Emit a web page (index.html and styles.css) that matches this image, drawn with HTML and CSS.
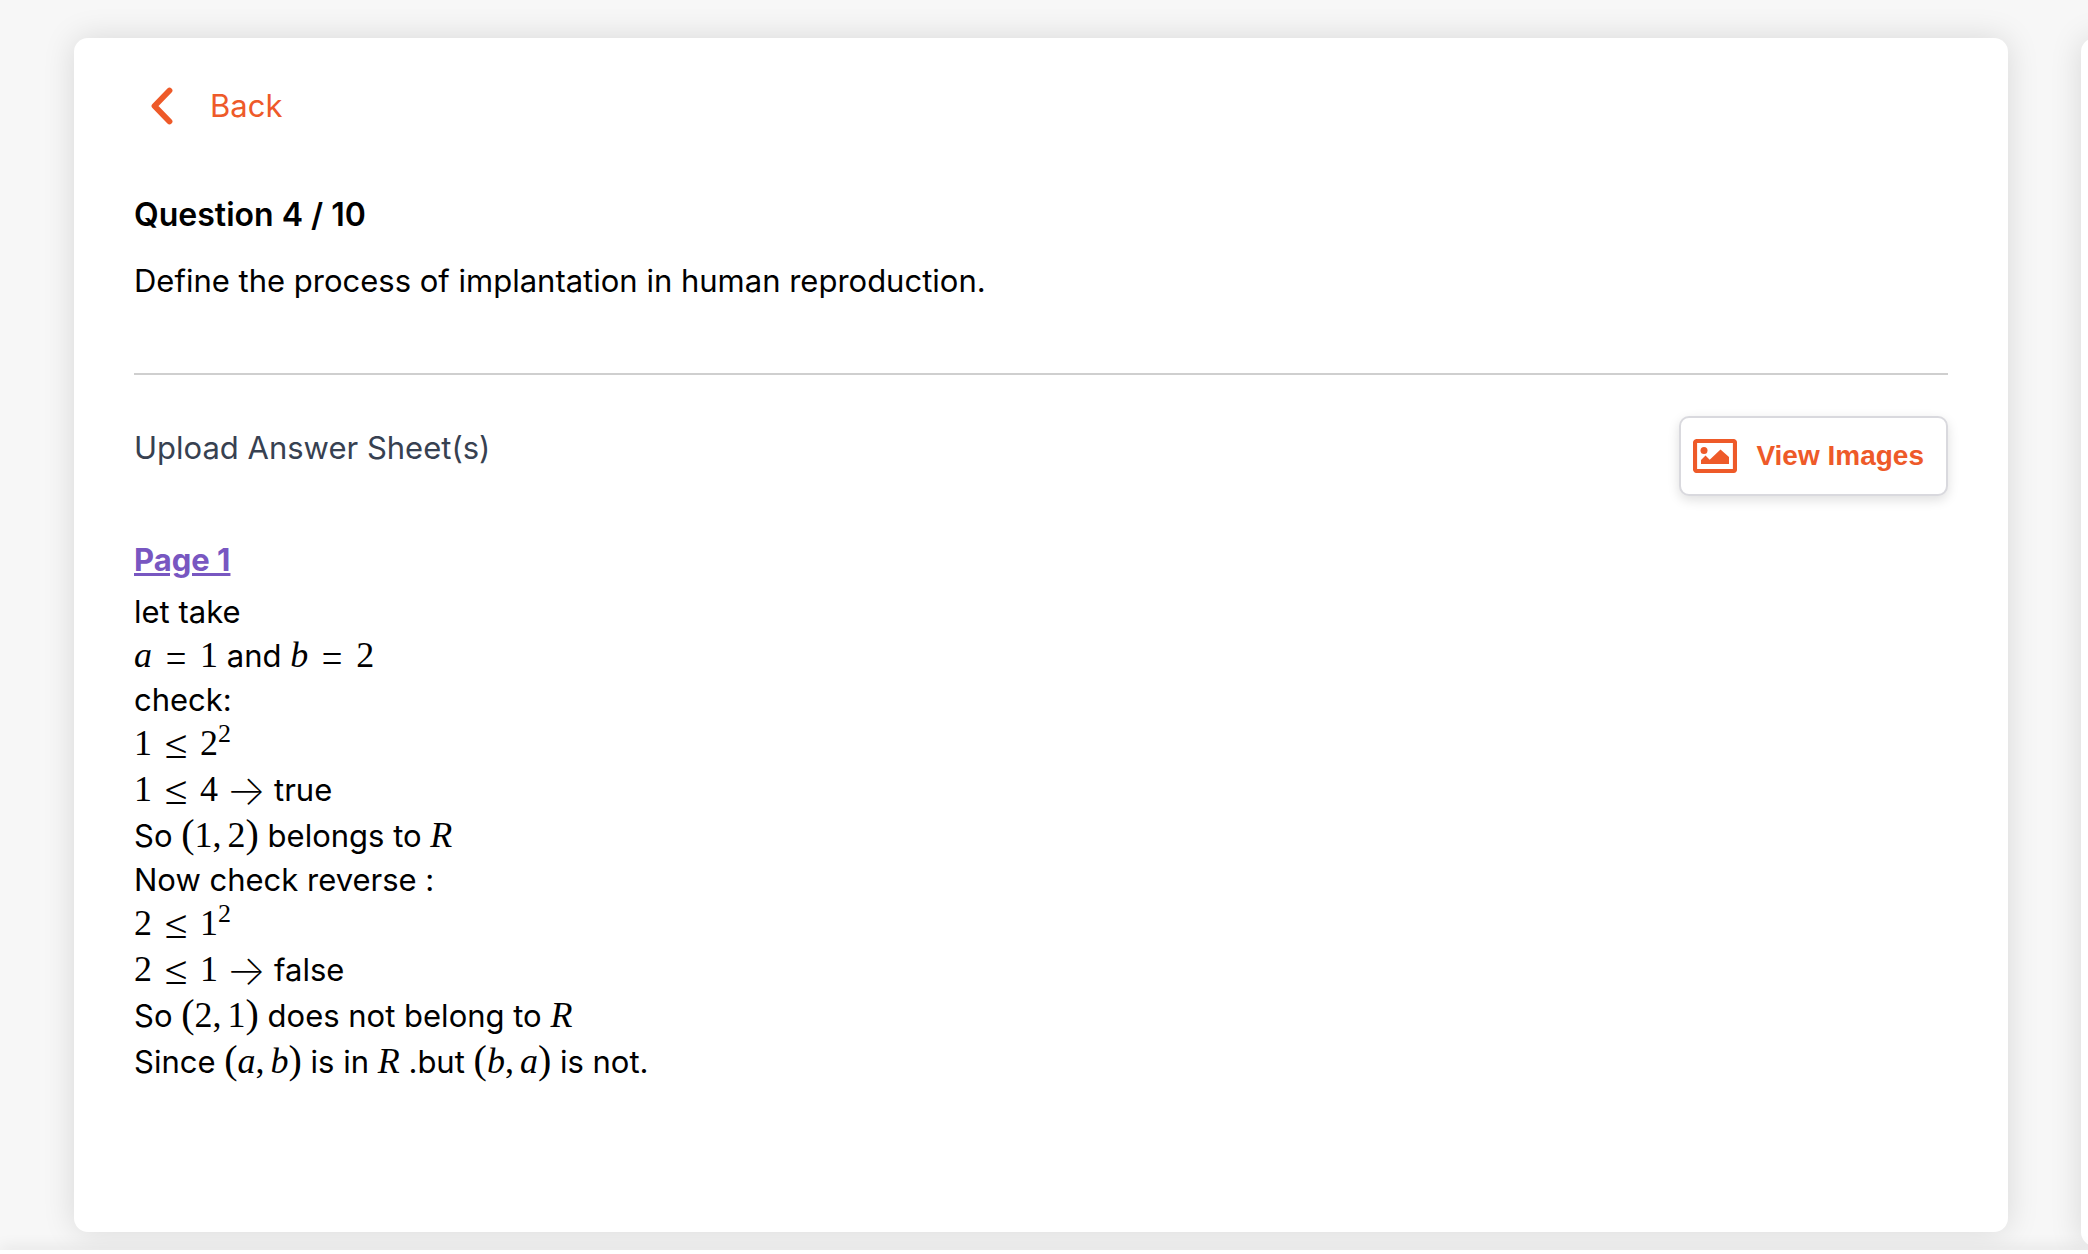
FILE: index.html
```html
<!DOCTYPE html>
<html lang="en">
<head>
<meta charset="utf-8">
<title>Question 4 / 10</title>
<link rel="stylesheet" href="styles.css">
</head>
<body>
<div class="page">
  <main class="card question">
    <a class="back" href="#">
      <svg class="back-icon" viewBox="0 0 24 38" aria-hidden="true"><path d="M19.500 3.500 4.500 19l15 15.500" fill="none" stroke="currentColor" stroke-width="5.800" stroke-linecap="round" stroke-linejoin="round"/></svg>
      <span>Back</span>
    </a>
    <h1 class="title">Question 4 / 10</h1>
    <p class="prompt">Define the process of implantation in human reproduction.</p>
    <section class="answer">
      <div class="toolbar">
        <h2 class="subtitle">Upload Answer Sheet(s)</h2>
        <button class="view" type="button">
          <svg class="view-icon" viewBox="0 0 44 34" aria-hidden="true"><rect x="2" y="2" width="40" height="30" rx="2" fill="none" stroke="currentColor" stroke-width="4.200"/><circle cx="11" cy="11.500" r="3.500" fill="currentColor"/><path d="M8 25v-4l4.500-4.500 4.200 4.200L27.500 10.500 36 18v7z" fill="currentColor"/></svg>
          <span>View Images</span>
        </button>
      </div>
      <a class="page-link" href="#">Page 1</a>
      <div class="sheet">
        <p>let take</p>
        <p><span class="math"><i>a</i><span class="rel">=</span>1</span> and <span class="math"><i>b</i><span class="rel">=</span>2</span></p>
        <p>check:</p>
        <p><span class="math">1<span class="rel">≤</span>2<sup>2</sup></span></p>
        <p class="tall"><span class="math">1<span class="rel">≤</span>4<span class="arrow">→</span></span>true</p>
        <p class="tall">So <span class="math"><span class="paren">(</span>1<span class="comma">,</span>2<span class="paren">)</span></span> belongs to <span class="math"><i>R</i></span></p>
        <p>Now check reverse :</p>
        <p><span class="math">2<span class="rel">≤</span>1<sup>2</sup></span></p>
        <p class="tall"><span class="math">2<span class="rel">≤</span>1<span class="arrow">→</span></span>false</p>
        <p class="tall">So <span class="math"><span class="paren">(</span>2<span class="comma">,</span>1<span class="paren">)</span></span> does not belong to <span class="math"><i>R</i></span></p>
        <p class="tall">Since <span class="math"><span class="paren">(</span><i>a</i><span class="comma">,</span><i>b</i><span class="paren">)</span></span> is in <span class="math"><i>R</i></span> .but <span class="math"><span class="paren">(</span><i>b</i><span class="comma">,</span><i>a</i><span class="paren">)</span></span> is not.</p>
      </div>
    </section>
  </main>
  <aside class="card next"></aside>
</div>
<footer class="bar"></footer>
</body>
</html>
```
FILE: styles.css
```css
* {
  box-sizing: border-box;
}

body {
  margin: 0;
  min-height: 100vh;
  display: flex;
  flex-direction: column;
  overflow: hidden;
  background: #f7f7f7;
  color: #000;
  font: 400 31px/44px Inter, "Liberation Sans", sans-serif;
}

h1, h2, p {
  margin: 0;
  font-size: inherit;
}

.page {
  flex: 1;
  display: flex;
  gap: 73px;
  padding: 38px 0 4px 74px;
}

.card {
  background: #fff;
  border-radius: 14px;
  box-shadow: 0 0 32px rgba(0, 0, 0, 0.13);
}

.question {
  flex: 1;
  margin-bottom: 14px;
  padding: 46px 60px;
}

.next {
  flex: 0 0 40px;
  margin-right: -33px;
}

.bar {
  height: 4px;
  background: #fff;
  box-shadow: 0 0 16px rgba(0, 0, 0, 0.2);
}

.back {
  display: inline-flex;
  align-items: center;
  gap: 36px;
  margin-left: 16px;
  color: #ee5a29;
  text-decoration: none;
}

.back-icon {
  width: 24px;
  height: 38px;
}

.title {
  margin-top: 57px;
  font-size: 32px;
  font-weight: 600;
}

.prompt {
  margin-top: 22px;
}

.answer {
  margin-top: 70px;
  padding-top: 41px;
  border-top: 2px solid #cfcfcf;
}

.toolbar {
  display: flex;
  justify-content: space-between;
  align-items: flex-start;
}

.subtitle {
  margin-top: 10px;
  color: #374151;
  font-weight: 400;
}

.view {
  display: flex;
  align-items: center;
  gap: 19px;
  height: 80px;
  padding: 0 22px 0 12px;
  border: 2px solid #d9d9de;
  border-radius: 10px;
  background: #fff;
  box-shadow: 0 4px 12px rgba(0, 0, 0, 0.13);
  color: #ee5a29;
  font: 700 28px/32px "Liberation Sans", Arial, sans-serif;
}

.view-icon {
  width: 44px;
  height: 34px;
}

.page-link {
  display: inline-block;
  margin-top: 42px;
  color: #7857c1;
  font-weight: 700;
}

.sheet {
  margin-top: 8px;
}

.tall {
  padding-top: 2px;
}

.math {
  font-family: "Liberation Serif", "Times New Roman", serif;
  font-size: 36px;
  line-height: 1;
}

.rel,
.arrow {
  display: inline-block;
  text-align: center;
  font-family: Inter, sans-serif;
  font-weight: 200;
  line-height: 20px;
}

.rel {
  width: 32px;
  margin: 0 8px;
  font-size: 46px;
  vertical-align: -5px;
}

.arrow {
  width: 40px;
  margin: 0 8px;
  font-size: 42px;
  vertical-align: -4px;
}

.paren {
  font-size: 40px;
  line-height: 0;
}

.comma {
  margin-right: 6px;
}

sup {
  font-size: 26px;
  line-height: 0;
  vertical-align: 13px;
}
```
